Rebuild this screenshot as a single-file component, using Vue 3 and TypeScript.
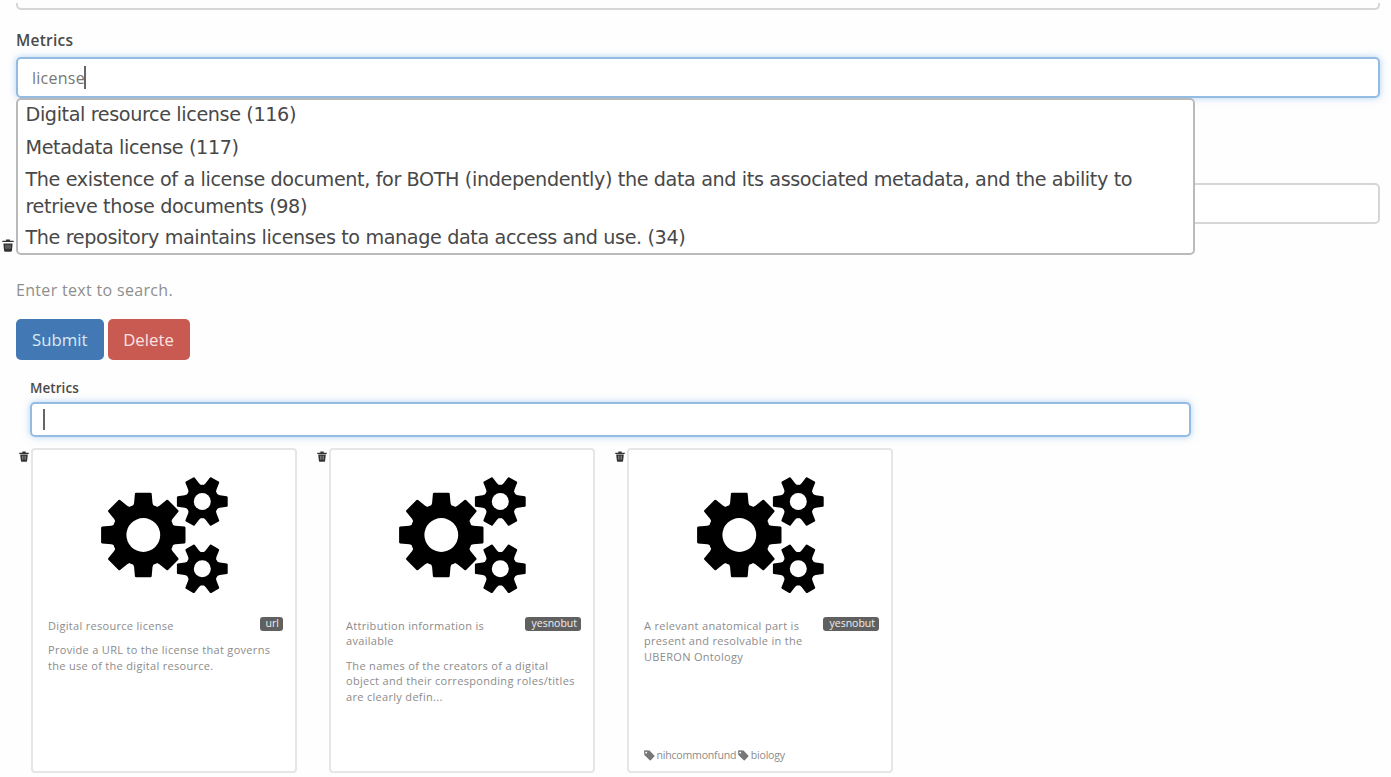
<script setup lang="ts">
interface MetricCard {
  title: string
  badge: string
  description?: string
  tags: string[]
}
interface Gear {
  cx: number
  cy: number
  body: number
  hole: number
  tooth: string
  angles: number[]
}

const suggestions: string[][] = [
  ['Digital resource license (116)'],
  ['Metadata license (117)'],
  [
    'The existence of a license document, for BOTH (independently) the data and its associated metadata, and the ability to',
    'retrieve those documents (98)',
  ],
  ['The repository maintains licenses to manage data access and use. (34)'],
]

const cards: MetricCard[] = [
  {
    title: 'Digital resource license',
    badge: 'url',
    description: 'Provide a URL to the license that governs\nthe use of the digital resource.',
    tags: [],
  },
  {
    title: 'Attribution information is\navailable',
    badge: 'yesnobut',
    description:
      'The names of the creators of a digital\nobject and their corresponding roles/titles\nare clearly defin...',
    tags: [],
  },
  {
    title: 'A relevant anatomical part is\npresent and resolvable in the\nUBERON Ontology',
    badge: 'yesnobut',
    tags: ['nihcommonfund', 'biology'],
  },
]

const steps = (n: number): number[] => Array.from({ length: n }, (_, i) => (i * 360) / n)
const largeTooth = 'M-10.6 -28L-9.2 -32L-8.4 -41.2Q-8.2 -42.2 -7.2 -42.2H7.2Q8.2 -42.2 8.4 -41.2L9.2 -32L10.6 -28Z'
const smallTooth = 'M-7.4 -14L-6.3 -17.5L-5.3 -24.6Q-5 -25.4 -4.2 -25.4H4.2Q5 -25.4 5.3 -24.6L6.3 -17.5L7.4 -14Z'
const gears: Gear[] = [
  { cx: 43.3, cy: 65, body: 31.5, hole: 16.9, tooth: largeTooth, angles: steps(8) },
  { cx: 102.3, cy: 31.5, body: 16.8, hole: 8.5, tooth: smallTooth, angles: steps(6).map((a) => a + 30) },
  { cx: 102.3, cy: 98.8, body: 16.8, hole: 8.5, tooth: smallTooth, angles: steps(6).map((a) => a + 30) },
]
</script>

<template>
  <main class="page">
    <section class="form">
      <div class="field-end"></div>
      <label class="label">Metrics</label>
      <div class="search">
        <div class="input focused"><span class="typed">license</span><i class="caret"></i></div>
        <ul class="menu">
          <li v-for="item in suggestions" :key="item[0]">
            <span v-for="line in item" :key="line" class="line">{{ line }}</span>
          </li>
        </ul>
      </div>
      <div class="input plain"></div>
      <div class="remove">
        <svg class="trash wide" viewBox="0 0 12 13" preserveAspectRatio="none">
          <path d="M4 1.8V.6h4v1.2h3.7V3H.3V1.8z" />
          <path d="M1.4 4.4h9.2l-.6 7q-.2 1.4-1.5 1.4h-5q-1.3 0-1.5-1.4z" />
          <path class="slots" d="M4 5.8v4M6 5.8v4M8 5.8v4" />
        </svg>
      </div>
      <p class="help">Enter text to search.</p>
      <div class="actions">
        <button class="btn submit">Submit</button>
        <button class="btn delete">Delete</button>
      </div>
    </section>

    <section class="results">
      <label class="label small">Metrics</label>
      <div class="input focused short"><i class="caret"></i></div>
      <div class="cards">
        <div v-for="card in cards" :key="card.title" class="cell">
          <svg class="trash" viewBox="0 0 12 13" preserveAspectRatio="none">
            <path d="M4 2V.6h4V2h3.7v1.6H.3V2z" />
            <path d="M1.4 4.2h9.2l-.9 7.2q-.2 1.4-1.5 1.4H3.8q-1.3 0-1.5-1.4z" />
            <path class="slots" d="M4.2 5.6v4.6M6 5.6v4.6M7.8 5.6v4.6" />
          </svg>
          <article class="card">
            <svg class="gears" viewBox="0 0 130 130">
              <g v-for="(gear, i) in gears" :key="i" :transform="`translate(${gear.cx} ${gear.cy})`">
                <circle :r="gear.body" />
                <path v-for="a in gear.angles" :key="a" :d="gear.tooth" :transform="`rotate(${a})`" />
                <circle class="hole" :r="gear.hole" />
              </g>
            </svg>
            <header class="heading">
              <span class="title">{{ card.title }}</span>
              <span class="badge">{{ card.badge }}</span>
            </header>
            <p v-if="card.description" class="description">{{ card.description }}</p>
            <footer v-if="card.tags.length" class="tags">
              <span v-for="tag in card.tags" :key="tag" class="tag">
                <svg viewBox="0 0 10 10">
                  <path fill-rule="evenodd" d="M0 .8L.6.3 5 .5 9.8 5.4 6 9.6 5.2 9.4.3 4.5zM2 1.6a.8.8 0 1 0 .01 0z" />
                </svg>{{ tag }}
              </span>
            </footer>
          </article>
        </div>
      </div>
    </section>
  </main>
</template>

<style>
html,
body {
  background: #fefefe;
  overflow: hidden;
}
</style>

<style scoped>
* {
  box-sizing: border-box;
}
.page {
  width: 1391px;
  height: 777px;
  padding-top: 3px;
  overflow: hidden;
  font-family: 'Open Sans', 'Noto Sans', sans-serif;
  color: #333;
}
.form {
  padding: 0 11px 0 16px;
}
.field-end {
  height: 7px;
  border: 2px solid #d6d6d6;
  border-top: 0;
  border-radius: 0 0 5px 5px;
}
.label {
  display: block;
  height: 24px;
  margin: 18px 0 5px;
  font-size: 15.5px;
  line-height: 24px;
  font-weight: 600;
  letter-spacing: 0.25px;
  color: #4a4a4a;
}
.search {
  position: relative;
}
.input {
  display: flex;
  align-items: center;
  height: 41px;
  padding-left: 14px;
  border: 2px solid #d6d6d6;
  border-radius: 5px;
  background: #fff;
}
.focused {
  border-color: #94bce3;
  box-shadow: 0 0 7px rgba(102, 165, 233, 0.5);
}
.typed {
  font-size: 16px;
  letter-spacing: 0.25px;
  color: #777;
}
.caret {
  width: 2px;
  height: 23px;
  margin-left: -1px;
  background: #666;
}
.menu {
  position: absolute;
  z-index: 2;
  top: 41px;
  left: 0;
  width: 1179px;
  height: 157px;
  margin: 0;
  padding: 1px 8px 0 7.5px;
  list-style: none;
  border: 2px solid #bababa;
  border-radius: 5px;
  background: #fff;
  font: 19.2px/27px 'DejaVu Sans', sans-serif;
  letter-spacing: -0.385px;
  color: #484848;
}
.menu li {
  margin-bottom: 5.5px;
}
.menu li:nth-child(3) {
  margin-bottom: 4px;
}
.line {
  display: block;
  white-space: nowrap;
}
.plain {
  margin-top: 85px;
}
.remove {
  height: 14px;
  margin: 15px 0 0 -14px;
}
.trash {
  display: block;
  width: 10px;
  height: 11px;
  fill: #333;
}
.trash.wide {
  width: 12px;
  height: 13px;
}
.slots {
  fill: none;
  stroke: #999;
  stroke-width: 0.8;
}
.help {
  height: 24px;
  margin: 24px 0 0;
  font-size: 16px;
  line-height: 26px;
  letter-spacing: 0.32px;
  color: #8e8e8e;
}
.actions {
  display: flex;
  gap: 4px;
  margin-top: 18px;
}
.btn {
  height: 41px;
  padding: 0;
  border: 0;
  border-radius: 5px;
  font: 16.8px/41px 'Open Sans', sans-serif;
}
.submit {
  width: 87.5px;
  background: #4279b4;
  color: #dbe9f6;
}
.delete {
  width: 82px;
  background: #c95a52;
  color: #fae3e1;
}
.results {
  padding-left: 30px;
}
.label.small {
  height: 20px;
  margin: 18px 0 4px;
  font-size: 13.5px;
  line-height: 20px;
  letter-spacing: 0.05px;
}
.short {
  width: 1161px;
  height: 35px;
  padding-left: 12px;
}
.short .caret {
  height: 21px;
}
.cards {
  display: flex;
  gap: 22px;
  margin: 11px 0 0 -12px;
}
.cell {
  display: flex;
  gap: 2px;
  width: 276px;
  padding-left: 1px;
}
.cell .trash {
  flex: none;
  margin-top: 3px;
}
.card {
  display: flex;
  flex-direction: column;
  flex: none;
  width: 266px;
  height: 325px;
  padding: 20px 12px 8px 15px;
  border: 2px solid #e6e6e6;
  border-radius: 4px;
  background: #fff;
  font-size: 11px;
  line-height: 15.4px;
  letter-spacing: 0.31px;
  color: #8c8c8c;
}
.gears {
  width: 130px;
  height: 130px;
  flex: none;
  margin-left: 52px;
}
.hole {
  fill: #fff;
}
.heading {
  display: flex;
  justify-content: space-between;
  align-items: flex-start;
  margin-top: 18px;
}
.title,
.description {
  white-space: pre;
}
.badge {
  height: 14px;
  padding: 0 4px 0 6px;
  border-radius: 3px;
  background: #606060;
  color: #eee;
  font-size: 10.5px;
  line-height: 12px;
  letter-spacing: 0;
  margin-top: -1px;
}
.description {
  margin: 9px 0 0;
}
.tags {
  display: flex;
  gap: 2px;
  margin-top: auto;
  font-size: 10.6px;
  letter-spacing: -0.22px;
}
.tag {
  display: flex;
  align-items: center;
  gap: 1.5px;
}
.tag svg {
  width: 11px;
  height: 11px;
  fill: #777;
}
</style>
